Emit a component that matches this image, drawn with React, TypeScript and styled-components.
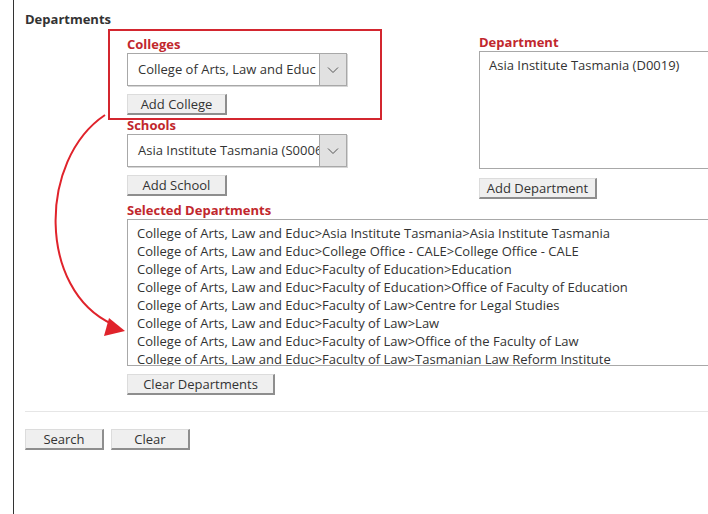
import * as React from "react";
import styled, { createGlobalStyle } from "styled-components";

const GlobalStyle = createGlobalStyle`
  html, body {
    margin: 0;
    padding: 0;
    overflow: hidden;
    background: #ffffff;
  }
  body {
    font-family: "Open Sans", "Liberation Sans", sans-serif;
    font-size: 13px;
    color: #333333;
  }
`;

const selectedDepartments = [
  "College of Arts, Law and Educ>Asia Institute Tasmania>Asia Institute Tasmania",
  "College of Arts, Law and Educ>College Office - CALE>College Office - CALE",
  "College of Arts, Law and Educ>Faculty of Education>Education",
  "College of Arts, Law and Educ>Faculty of Education>Office of Faculty of Education",
  "College of Arts, Law and Educ>Faculty of Law>Centre for Legal Studies",
  "College of Arts, Law and Educ>Faculty of Law>Law",
  "College of Arts, Law and Educ>Faculty of Law>Office of the Faculty of Law",
  "College of Arts, Law and Educ>Faculty of Law>Tasmanian Law Reform Institute",
];

export default function App() {
  return (
    <>
      <GlobalStyle />
      <Page>
        <SectionTitle>Departments</SectionTitle>
        <FormRow>
          <LeftColumn>
            <Field>
              <Label>Colleges</Label>
              <FakeSelect value="College of Arts, Law and Educ (C0004)" />
              <ActionButton $width={100}>Add College</ActionButton>
            </Field>
            <Field>
              <Label>Schools</Label>
              <FakeSelect value="Asia Institute Tasmania (S0006)" />
              <ActionButton $width={100}>Add School</ActionButton>
            </Field>
          </LeftColumn>
          <RightColumn>
            <Label>Department</Label>
            <ListBox $height={118} $gap={9}>
              <ListItem>Asia Institute Tasmania (D0019)</ListItem>
            </ListBox>
            <ActionButton $width={118}>Add Department</ActionButton>
          </RightColumn>
        </FormRow>
        <SelectedBlock>
          <Label>Selected Departments</Label>
          <ListBox $height={147} $wide>
            {selectedDepartments.map((d, i) => (
              <ListItem key={i}>{d}</ListItem>
            ))}
          </ListBox>
          <ActionButton $width={148}>Clear Departments</ActionButton>
        </SelectedBlock>
        <Divider />
        <ButtonBar>
          <ActionButton $width={79}>Search</ActionButton>
          <ActionButton $width={79}>Clear</ActionButton>
        </ButtonBar>

        <Highlight />
        <Arrow width="140" height="350" viewBox="0 0 140 350">
          <path
            d="M105 115 C 38 160, 38 290, 112 324"
            fill="none"
            stroke="#e0232b"
            strokeWidth="2"
          />
          <polygon points="109,318 104,336 125,331" fill="#e0232b" />
        </Arrow>
      </Page>
    </>
  );
}

function FakeSelect({ value }: { value: string }) {
  return (
    <SelectBox>
      <SelectText>{value}</SelectText>
      <SelectArrow>
        <svg width="12" height="8" viewBox="0 0 12 8">
          <path d="M1 1.5 L6 6.5 L11 1.5" fill="none" stroke="#555" strokeWidth="1" />
        </svg>
      </SelectArrow>
    </SelectBox>
  );
}

const Page = styled.div`
  position: relative;
  margin-left: 13px;
  border-left: 1px solid #333333;
  padding: 10px 0 0 11px;
  box-sizing: border-box;
  height: 514px;
`;

const SectionTitle = styled.div`
  font-weight: 700;
  line-height: 18px;
  color: #333333;
`;

const FormRow = styled.div`
  display: flex;
  margin-left: 102px;
  margin-top: 7px;
`;

const LeftColumn = styled.div`
  display: flex;
  flex-direction: column;
  width: 220px;
`;

const Field = styled.div`
  display: flex;
  flex-direction: column;
  align-items: flex-start;
  margin-bottom: 1px;
`;

const RightColumn = styled.div`
  display: flex;
  flex-direction: column;
  align-items: flex-start;
  margin-left: 132px;
  margin-top: -2px;
  width: 260px;
`;

const Label = styled.div`
  color: #c1272d;
  font-weight: 700;
  line-height: 18px;
`;

const SelectBox = styled.div`
  display: flex;
  width: 220px;
  height: 33px;
  box-sizing: border-box;
  border: 1px solid #a8a8a8;
  box-shadow: 1px 1px 0 #d6d6d6;
  background: #ffffff;
  margin-bottom: 8px;
`;

const SelectText = styled.div`
  flex: 1;
  overflow: hidden;
  white-space: nowrap;
  line-height: 31px;
  padding-left: 10px;
`;

const SelectArrow = styled.div`
  width: 26px;
  display: flex;
  align-items: center;
  justify-content: center;
  background: #e1e1e1;
  border-left: 1px solid #a8a8a8;
`;

const ActionButton = styled.button<{ $width?: number }>`
  font-family: "Open Sans", "Liberation Sans", sans-serif;
  font-size: 13px;
  color: #333333;
  height: 21px;
  box-sizing: border-box;
  width: ${(p) => (p.$width ? `${p.$width}px` : "auto")};
  padding: 0;
  background: #efefef;
  border-top: 1px solid #dcdcdc;
  border-left: 1px solid #dcdcdc;
  border-right: 2px solid #8e8e8e;
  border-bottom: 2px solid #8e8e8e;
  border-radius: 0;
  line-height: 17px;
  margin: 0;
`;

const ListBox = styled.div<{ $height: number; $wide?: boolean; $gap?: number }>`
  width: ${(p) => (p.$wide ? "620px" : "260px")};
  height: ${(p) => p.$height}px;
  box-sizing: border-box;
  border: 1px solid #a8a8a8;
  padding: 4px 0 0 9px;
  overflow: hidden;
  margin-bottom: ${(p) => p.$gap ?? 8}px;
  background: #ffffff;
`;

const ListItem = styled.div`
  line-height: 18px;
  white-space: nowrap;
`;

const SelectedBlock = styled.div`
  display: flex;
  flex-direction: column;
  align-items: flex-start;
  margin-left: 102px;
  margin-top: 2px;
`;

const Divider = styled.div`
  height: 1px;
  background: #e6e6e6;
  margin-top: 16px;
`;

const ButtonBar = styled.div`
  display: flex;
  gap: 7px;
  margin-top: 17px;
`;

const Highlight = styled.div`
  position: absolute;
  left: 94px;
  top: 29px;
  width: 274px;
  height: 91px;
  box-sizing: border-box;
  border: 2px solid #d3262f;
  pointer-events: none;
`;

const Arrow = styled.svg`
  position: absolute;
  left: -14px;
  top: 0;
  pointer-events: none;
`;
